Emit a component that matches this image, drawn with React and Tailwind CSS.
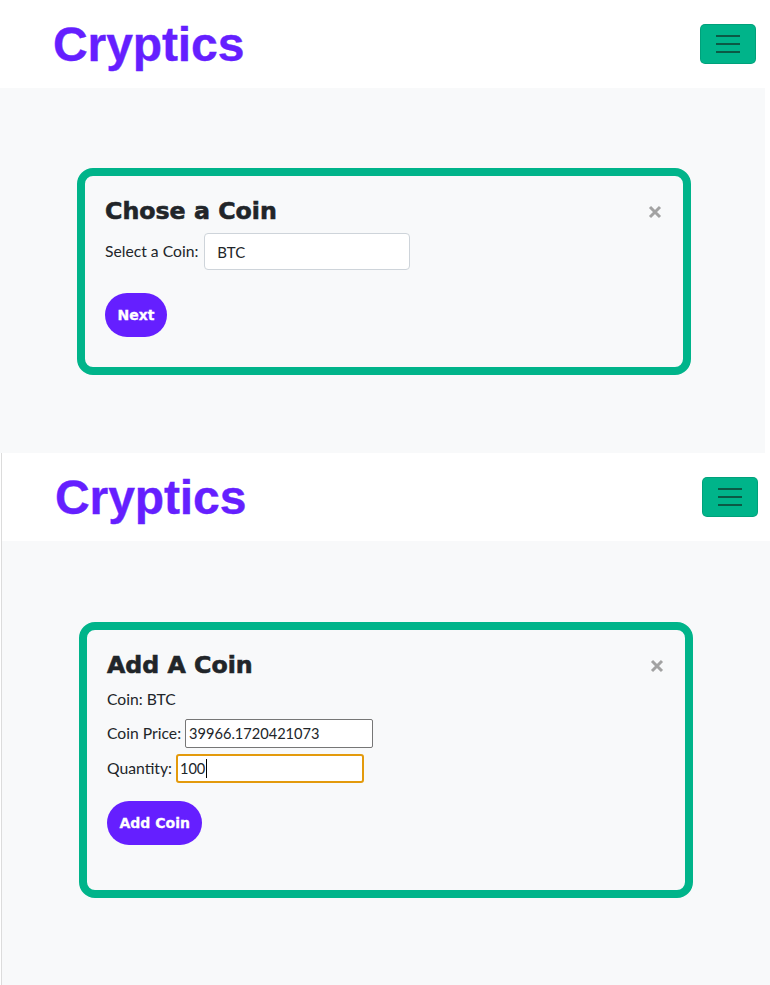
import React from "react";

function Hamburger() {
  return (
    <button className="flex h-[40px] w-[56px] items-center justify-center rounded-[5px] border border-black/10 bg-[#00b48a]">
      <svg width="24" height="18" viewBox="0 0 24 18">
        <path d="M0 1h24M0 9h24M0 17h24" stroke="#0b5a45" strokeWidth="2" />
      </svg>
    </button>
  );
}

function Header() {
  return (
    <div className="flex h-[88px] items-center justify-between bg-white pl-[53px] pr-[12px]">
      <div className="pt-[2px] font-[family-name:'Liberation_Sans',Arial,sans-serif] text-[48px] leading-[54px] font-bold tracking-[-0.1px] text-[#651fff] [-webkit-text-stroke:0.4px_#651fff]">
        Cryptics
      </div>
      <Hamburger />
    </div>
  );
}

function CloseX() {
  return (
    <svg width="14" height="14" viewBox="0 0 14 14" className="mr-[1px]">
      <path d="M2 2L12 12M12 2L2 12" stroke="#a2a2a2" strokeWidth="3" />
    </svg>
  );
}

function Title({ children }) {
  return (
    <div className="flex items-center justify-between">
      <h3 className="font-[family-name:'DejaVu_Sans',sans-serif] text-[23.7px] leading-[29px] font-bold text-[#212529] [-webkit-text-stroke:0.6px_#212529]">
        {children}
      </h3>
      <CloseX />
    </div>
  );
}

function PurpleButton({ children }) {
  return (
    <button className="h-[44px] rounded-[22px] bg-[#651fff] px-[12.5px] font-[family-name:'DejaVu_Sans',sans-serif] text-[14px] font-bold text-white [-webkit-text-stroke:0.3px_#ffffff]">
      {children}
    </button>
  );
}

const body = "font-[family-name:Lato,sans-serif] text-[15.7px] text-[#212529]";

export default function App() {
  return (
    <div className="w-[770px] bg-white">
      {/* first screen */}
      <div className="h-[453px] w-[768px] bg-white">
        <Header />
        <div className="h-[365px] w-[765px] bg-[#f8f9fa] pt-[80px]">
          <div className={`ml-[77px] w-[614px] rounded-[16px] border-[8px] border-[#00b48a] bg-[#f8f9fa] px-[20px] pt-[21px] pb-[30px] ${body}`}>
            <Title>Chose a Coin</Title>
            <div className="mt-[7px] flex items-center gap-[6px]">
              <span>Select a Coin:</span>
              <input
                readOnly
                value="BTC"
                className="h-[37px] w-[206px] rounded-[4px] border border-[#ced4da] bg-white px-[12px] text-[15px] outline-none"
              />
            </div>
            <div className="mt-[23px]">
              <PurpleButton>Next</PurpleButton>
            </div>
          </div>
        </div>
      </div>

      {/* second screen */}
      <div className="flex h-[532px] bg-white pl-[1px]">
        <div className="w-[769px] border-l border-[#dcdcdc]">
          <Header />
          <div className="h-[444px] bg-[#f8f9fa] pt-[81px]">
            <div className={`ml-[77px] w-[614px] rounded-[16px] border-[8px] border-[#00b48a] bg-[#f8f9fa] px-[20px] pt-[21px] pb-[45px] ${body}`}>
              <Title>Add A Coin</Title>
              <div className="mt-[7px] leading-[24px]">Coin: BTC</div>
              <div className="mt-[8px] flex items-center gap-[4px]">
                <span>Coin Price:</span>
                <input
                  readOnly
                  value="39966.1720421073"
                  className="h-[29px] w-[188px] rounded-[2px] border border-[#767676] bg-white px-[3px] text-[14.6px] outline-none"
                />
              </div>
              <div className="mt-[6px] flex items-center gap-[4px]">
                <span>Quantity:</span>
                <div className="flex h-[29px] w-[188px] items-center rounded-[3px] border-2 border-[#e39a0c] bg-white px-[2px] text-[14.6px]">
                  <span>100</span>
                  <span className="ml-px h-[19px] w-px bg-black" />
                </div>
              </div>
              <div className="mt-[18px]">
                <PurpleButton>Add Coin</PurpleButton>
              </div>
            </div>
          </div>
        </div>
      </div>
    </div>
  );
}
